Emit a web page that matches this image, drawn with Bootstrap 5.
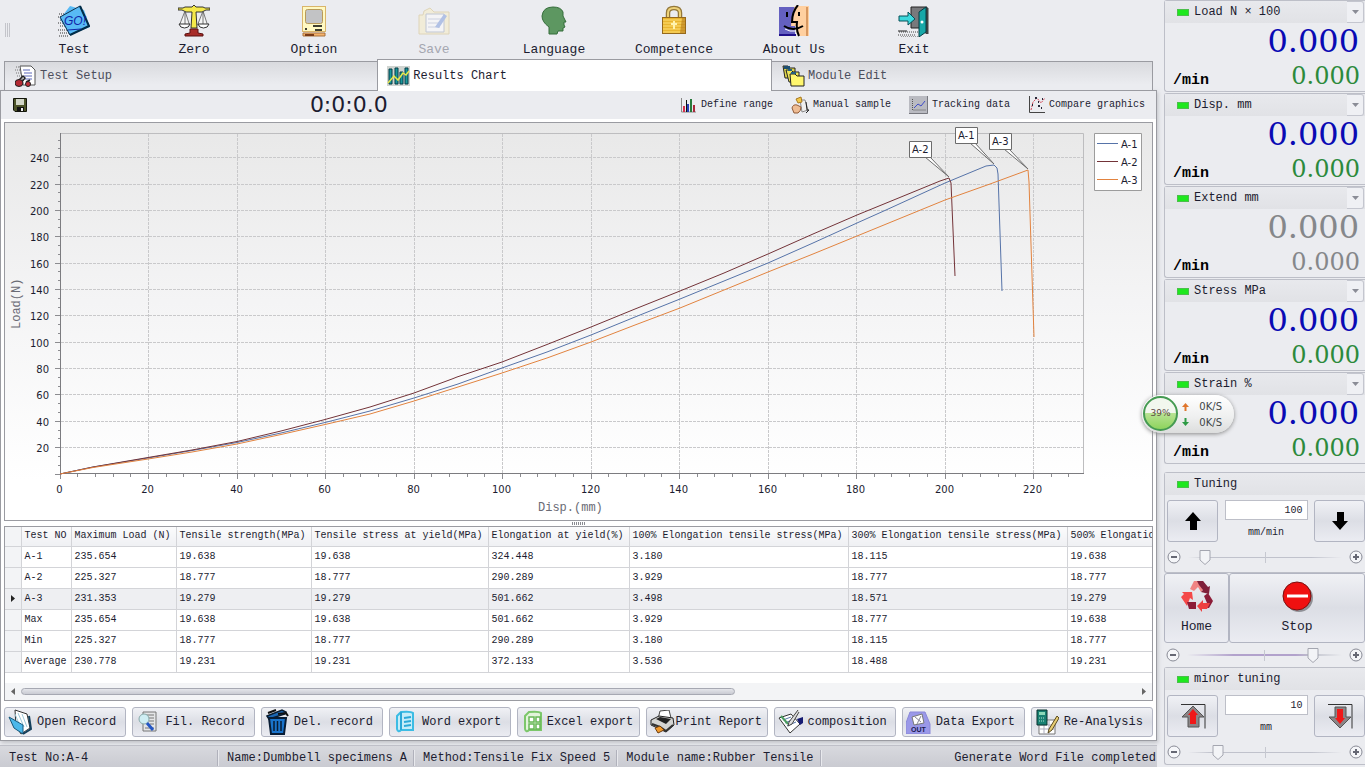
<!DOCTYPE html>
<html lang="en">
<head>
<meta charset="utf-8">
<meta name="viewport" content="width=device-width, initial-scale=1">
<title>Tensile Test - Results Chart</title>
<link href="https://cdn.jsdelivr.net/npm/bootstrap@5.3.0/dist/css/bootstrap.min.css" rel="stylesheet">
<style>
  :root { --ink: #1c1c30; --line: #9a9ba1; --soft: #bdbfc8; --face: #ebecf0; }
  body { font: 12px/16px "Liberation Mono", monospace; color: var(--ink); background: var(--face); overflow-x: hidden; }
  button { font: inherit; color: inherit; background: none; border: 0; padding: 0; }
  svg { display: block; flex: none; }

  .grip { width: 14px; padding-left: 5px; }
  .grip i { display: block; width: 5px; height: 14px; background: repeating-linear-gradient(90deg, #c3c4ca 0 1px, transparent 1px 2px); }
  .tool { width: 120px; font-size: 13px; line-height: 18px; padding-top: 3px; }
  .tool svg { margin: 0 auto 4px; }
  .tool:disabled { color: #a5a7b0; }
  .tool:disabled svg { opacity: .45; }
  .ribbon { height: 60px; }

  .tabs { height: 31px; margin: 0 4px; position: relative; z-index: 1; }
  .tab-item { height: 30px; border: 1px solid var(--line); background: linear-gradient(#d9dade, #ebecf0 80%); color: #4c4e5c; padding-left: 10px; text-align: left; gap: 3px; }
  .tab-item.on { height: 32px; background: #fff; color: var(--ink); border-bottom: 0; padding-left: 9px; }
  .w-a { flex: 373 1 0; border-right: 0; } .w-b { flex: 395 1 0; } .w-c { flex: 381 1 0; border-left: 0; }

  .main-col { min-width: 0; margin-right: 3px; }
  .sheet { border: 1px solid var(--line); background: #fff; box-shadow: 1px 2px 4px #9a9ba188; margin-top: -1px; }
  .subbar { height: 28px; background: var(--face); display: grid; grid-template-columns: 27% 1fr auto; align-items: center; padding-right: 11px; }
  .clock { font: 22px/24px "DejaVu Sans", sans-serif; }
  .subbar .links { gap: 18px; font-size: 10px; }
  .frame { border: 1px solid var(--line); }
  .chart-box { margin: 3px 3px 0; background: linear-gradient(#e8e8e8, #f4f4f5 45%, #fff 90%); }
  .chart-box svg { width: 100%; height: auto; }
  .chart-box text { font: 10px "DejaVu Sans", sans-serif; fill: #1c1c30; }
  .chart-box text.ttl { font: 12px "Liberation Mono", monospace; fill: #6a6b75; }
  .split { height: 5px; }
  .split i { width: 13px; height: 3px; background: repeating-linear-gradient(90deg, #8a8b91 0 1px, #fff 1px 2px); }

  .grid-box { margin: 0 3px; overflow: hidden; }
  .results { width: 1282px; table-layout: fixed; border-collapse: collapse; font-size: 10px; line-height: 14px; }
  .results th, .results td { border: 1px solid #d3d4d8; border-left: 0; border-top: 0; padding: 0 2px 0 3px; height: 21px; font-weight: 400; white-space: nowrap; overflow: hidden; }
  .results thead th { height: 19px; background: linear-gradient(#fbfbfc, #eff0f3); }
  .results .mark-col { background: #f3f4f6; padding: 0 0 0 6px; }
  .results .cur td { background: #eeeff2; }
  .hbar { height: 17px; margin-top: 10px; background: #f3f4f6; padding: 0 6px; gap: 6px; }
  .hbar .lane { flex: 1; }
  .hbar .knob { width: 64%; height: 7px; border: 1px solid #a6a8b2; border-radius: 4px; background: linear-gradient(#e4e5ea, #c9cbd3); }

  .acts { margin: 6px 3px 3px; gap: 6px; }
  .face { border: 1px solid #b2b5c2; border-radius: 3px; background: linear-gradient(#f0f1f5, #dcdee5 50%, #ebecf2); }
  .act { flex: 1 1 0; min-width: 0; height: 30px; padding: 0 4px 0 3px; white-space: nowrap; }
  .act span { flex: 1; text-align: center; }
  .status { height: 23px; margin-top: 4px; background: linear-gradient(#d8d9de, #c9cad1); border-top: 1px solid #bfc0c8; padding-top: 4px; }
  .status span { padding: 0 6px 0 9px; border-right: 1px solid #b0b1bb; box-shadow: 1px 0 #e8e9ed; height: 16px; white-space: nowrap; }
  .status span:first-child { width: 218px; }
  .status span:last-child { border: 0; box-shadow: none; padding-right: 1px; }

  .side { flex: 0 0 205px; padding-left: 4px; }
  .box { border: 1px solid var(--soft); border-right: 0; border-radius: 3px 0 0 3px; }
  .meter { height: 92px; margin-bottom: 1px; position: relative; }
  .cap { height: 22px; background: linear-gradient(#e8e9ed, #e1e2e6); padding-left: 12px; gap: 5px; }
  .cap b { width: 12px; height: 7px; background: #1ee81e; border: 1px solid #4bbf4b; }
  .drop { width: 17px; height: 22px; border: 1px solid #c4c6cf; border-left: 0; border-radius: 0 3px 3px 0; background: #eff0f4; margin-right: 1px; }
  .big { font: 32px/36px "DejaVu Serif", serif; color: #0a0ab4; text-align: right; padding-right: 6px; }
  .rate-row { padding-top: 3px; }
  .rate { font: bold 15px/18px "Liberation Mono", monospace; color: #000; padding-left: 8px; }
  .small-no { font: 24px/28px "DejaVu Serif", serif; color: #2c8a3c; padding-right: 5px; }
  .off .big, .off .small-no { color: #85878a; }

  .tune { height: 101px; }
  .step-row { padding: 5px 0 0 2px; }
  .step { width: 51px; height: 42px; }
  .amount { width: 83px; height: 20px; border: 1px solid var(--soft); border-radius: 0; background: #fff; text-align: right; font: 10px/14px "Liberation Mono", monospace; color: var(--ink); padding: 0 4px; }
  .amount-col { gap: 6px; }
  .unit { font-size: 10px; line-height: 14px; }
  .slide { height: 24px; margin-top: 3px; padding: 0 2px 0 2px; gap: 7px; }
  .slide input { appearance: none; -webkit-appearance: none; flex: 1; min-width: 0; height: 18px; margin: 0; background: linear-gradient(#c6c8d0, #c6c8d0) 50% 50% / 1px 11px no-repeat, linear-gradient(90deg, transparent, #c0c2cc 15%, #c0c2cc 80%, transparent) 0 50% / 100% 1px no-repeat; }
  .slide input.fill { background: linear-gradient(#c6c8d0, #c6c8d0) 50% 50% / 1px 11px no-repeat, linear-gradient(90deg, transparent, #b2a2cc 30%, #b2a2cc 70%, #c0c2cc 80%, transparent) 0 50% / 100% 2px no-repeat; }
  .slide input::-webkit-slider-thumb { -webkit-appearance: none; width: 12px; height: 18px; border: 0; background: url("data:image/svg+xml,%3Csvg xmlns='http://www.w3.org/2000/svg' width='12' height='18'%3E%3Cpath d='M1 2.500H11V12L6 16.500L1 12Z' fill='%23f3f4f7' stroke='%23a4a6b0'/%3E%3C/svg%3E") no-repeat; }
  .home-row { height: 70px; }
  .home-row button { font-size: 13px; line-height: 18px; }
  .home-row svg { margin: 0 auto 6px; }
  .home-key { width: 65px; }

  .netball { position: absolute; left: -23px; top: 22px; width: 92px; height: 38px; border-radius: 19px; background: linear-gradient(#fff, #eeefef 60%, #dcdddd); box-shadow: 0 1px 4px #888; font: 10px/16px "DejaVu Sans", sans-serif; color: #404548; z-index: 2; }
  .ball { width: 35px; height: 35px; border: 2px solid #459a52; border-radius: 50%; background: linear-gradient(#f2f7ee 50%, #b8e293 50%, #8ed45d); line-height: 31px; text-align: center; color: #5c4a44; margin: 1px 4px 0 1px; font-size: 9px; }
</style>
</head>
<body>
<div class="d-flex min-vh-100">
  <main class="main-col flex-grow-1 d-flex flex-column">
    <div class="ribbon d-flex">
      <div class="grip d-flex align-items-center"><i></i></div>
      <button class="tool"><svg width="32" height="32" viewBox="0 0 32 32"><path d="M1 9h8M0 12h7M2 15h7M0 18h7M2 21h6M0 25h10M2 28h10M1 31h10" stroke="#333" stroke-dasharray="1 1"/><path d="M12 1 26 5 32 22 12 30 2 14z" fill="#58baf5"/><path d="M2 12 22 1 31 21 12 30z" fill="#58baf5" stroke="#10304c" stroke-width="1"/><path d="m22 1 9 20-19 9" stroke="#002c48" stroke-width="2" fill="none"/><text x="6" y="20" font-family="Liberation Sans" font-size="12" font-style="italic" fill="#1024a8">GO!</text><path d="m10 25 13-1" stroke="#1024a8"/></svg>Test</button>
      <button class="tool"><svg width="32" height="32" viewBox="0 0 32 32"><path d="M0 3h5l2-1h7l2-2 2 2h7l2 1h5v2h-4l-4 2H18l1 16h-6l1-16H8L4 5H0z" fill="#f5e94a" stroke="#222" stroke-width=".9"/><path d="M7 6 1.500 20h10L7 6v13M25 6l-5.500 14h10L25 6v13" fill="#f5f5f5" stroke="#555" stroke-width=".8"/><path d="M1 19h11q-1 4-5.500 4T1 19M20 19h11q-1 4-5.500 4T20 19" fill="#fff" stroke="#333"/><path d="M12 24h8v4l5 1v2H7v-2l5-1z" fill="#a82c28" stroke="#5a1010"/></svg>Zero</button>
      <button class="tool"><svg width="32" height="32" viewBox="0 0 32 32"><rect x="4.500" y="1.500" width="23" height="25" fill="#fff9c2" stroke="#d9b56a"/><rect x="7.500" y="4.500" width="17" height="14" rx="2" fill="#c2c3c5" stroke="#b89a5a"/><path d="M15 21h9M17 25h7M7 24h2" stroke="#000" stroke-width="1.500"/><path d="M5 28h22v3H5z" fill="#f5b36c" stroke="#a8703a"/><path d="M7 30h9" stroke="#7a3c18" stroke-width="2"/></svg>Option</button>
      <button class="tool" disabled><svg width="32" height="32" viewBox="0 0 32 32"><path d="M1 10h4l1-4 6-3 4 4h15v22H1z" fill="#f9edbc" stroke="#d0b878"/><path d="M8 9h18v18H8z" fill="#fff" stroke="#8f9ab0"/><path d="M10 14h13M10 18h12M10 22h12" stroke="#a8b2cf"/><path d="m17 22 9-13 3 2-8 12z" fill="#6d8fd8"/></svg>Save</button>
      <button class="tool"><svg width="32" height="32" viewBox="0 0 32 32"><path d="M11 29v-7Q4 17 4 11 5 2 15 2q8 0 10 5v4l3 6h-2v3l1 2-2 1v3h-5l-1 3z" fill="#5d9761" stroke="#356d3b"/></svg>Language</button>
      <button class="tool"><svg width="32" height="32" viewBox="0 0 32 32"><path d="M10 13V8q0-5 6-5t6 5v5" fill="none" stroke="#94783a" stroke-width="4.500"/><path d="M10 13V8q0-5 6-5t6 5v5" fill="none" stroke="#eed279" stroke-width="2"/><rect x="4.500" y="12.500" width="23" height="16" fill="#e9b52f" stroke="#96691c"/><path d="M5 15h22M5 18h22M5 21h22M5 24h22M5 27h22" stroke="#ffdf77"/><path d="M24 13h3v15h-5z" fill="#b47a1c" opacity=".6"/><path d="M16 16v8M13 19h6" stroke="#fff3b0" stroke-width="2"/></svg>Competence</button>
      <button class="tool"><svg width="32" height="32" viewBox="0 0 32 32"><path d="M1 2h16v29H1z" fill="#6460c0"/><path d="M1 30h17" stroke="#20108a" stroke-width="2"/><path d="M17 1h14v30H20q-2-3-2-10h-5q1-13 4-20z" fill="#ffd0a0"/><path d="M29 2v29" stroke="#d89860" stroke-width="2"/><path d="M20 0q-6 7-6 17h5q-1 8 2 14" fill="none" stroke="#000" stroke-width="2"/><path d="M9 7v5M21 7v4" stroke="#000" stroke-width="2"/><path d="M6 21q9 6 19 0" stroke="#000" stroke-width="2" fill="none"/><path d="M7 24q5 3 10 2" stroke="#fff" fill="none"/></svg>About Us</button>
      <button class="tool"><svg width="32" height="32" viewBox="0 0 32 32"><path d="M1 27h19M0 30h18M3 32h18" stroke="#444" stroke-dasharray="1 1"/><path d="M13 2h16v21H13z" fill="#78797c" stroke="#222"/><path d="M29 3v26" stroke="#444" stroke-width="3"/><path d="m21 7 7-5v25l-7 5z" fill="#18a8a8" stroke="#053c44"/><path d="M1 11h9V7l7 7-7 6v-4H1z" fill="#3cd8dc" stroke="#075058"/><circle cx="24" cy="17" r="1.500" fill="#fff"/><path d="M0 26h9" stroke="#222"/></svg>Exit</button>
    </div>

    <div class="tabs d-flex align-items-end">
      <button class="tab-item w-a d-flex align-items-center"><svg width="22" height="22" viewBox="0 0 22 22"><path d="M5 1h11l4 4v15H8z" fill="#fff" stroke="#555"/><path d="M8 5h7M9 8h8M9 11h8M10 14h7" stroke="#5a66b8"/><path d="M1 2h4M0 5h5M1 8h5M2 11h4" stroke="#777" stroke-dasharray="1 1"/><path d="m3 16 5-5 2 2-4 5m5-1 4-2" stroke="#222" stroke-width="1.500" fill="none"/><ellipse cx="4" cy="18" rx="4" ry="3.500" fill="#b42a34" stroke="#222"/><circle cx="13" cy="19" r="2.500" fill="#c4303a" stroke="#222"/></svg>Test Setup</button>
      <button class="tab-item w-b on d-flex align-items-center"><svg width="23" height="20" viewBox="0 0 23 20"><path d="M0 0h23v20H0z" fill="#cfd4d0"/><path d="M2 3h3v15H2zM8 2h3v16H8zM13 6h3v12h-3zM18 2h3v16h-3z" fill="#19999b" stroke="#063c48"/><path d="m1 17 6-7 4 4 5-7 3 2 3-4" stroke="#e9e94a" stroke-width="1.500" fill="none"/></svg>Results Chart</button>
      <button class="tab-item w-c d-flex align-items-center"><svg width="23" height="22" viewBox="0 0 23 22"><path d="M1 1h5l2 2h5v10H3z" fill="#e0d64a" stroke="#222"/><path d="M2 1h6v3H2z" fill="#1d4f70"/><path d="M4 5h5l2 2h6v10H7z" fill="#efe65a" stroke="#222"/><path d="M8 9h5l2 2h7v10H9z" fill="#fff66e" stroke="#222"/><path d="M6 5h4M9 8h5" stroke="#256080" stroke-width="2"/></svg>Module Edit</button>
    </div>

    <section class="sheet d-flex flex-column">
      <div class="subbar">
        <button class="ms-2 ps-1" aria-label="Save"><svg width="14" height="14" viewBox="0 0 14 14"><path d="M.5.5h13v13H2L.5 12z" fill="#4c5328" stroke="#14160c"/><path d="M3 1h8v6H3z" fill="#d2d6c8"/><path d="M4 9h7v4H4z" fill="#111"/><path d="M8 10h2v3H8z" fill="#eee"/></svg></button>
        <span class="clock">0:0:0.0</span>
        <div class="links d-flex">
          <button class="d-flex align-items-center gap-1"><svg width="17" height="16" viewBox="0 0 17 16"><path d="M1.500 1v14H16" stroke="#888" fill="none"/><path d="M3 9h2v6H3z" fill="#d8304c"/><path d="M6 3h1v12H6z" fill="#111"/><path d="M7 7h2v8H7z" fill="#2740b8"/><path d="M10 2h2v13h-2z" fill="#277a3c"/><path d="M13 8h2v7h-2z" fill="#a8283c"/></svg>Define range</button>
          <button class="d-flex align-items-center gap-1"><svg width="18" height="18" viewBox="0 0 18 18"><path d="M9 4h5l3 10-6 2z" fill="#eee" stroke="#888"/><path d="m5 3 5-2 1 5-4 1z" fill="#f2c84a" stroke="#a87820"/><path d="m15 6 1 8h2l-3 3" stroke="#222" fill="none"/><path d="M1 12q1-4 5-3l4 2q0 4-3 6H3z" fill="#eebc94" stroke="#905a38"/></svg>Manual sample</button>
          <button class="d-flex align-items-center gap-1"><svg width="19" height="18" viewBox="0 0 19 18"><path d="M0 0h19v18H0z" fill="#b9bac1"/><path d="M0 17.500h18.500V0" stroke="#77787f" fill="none"/><path d="M3.500 3v11H17" stroke="#555" stroke-dasharray="1 1" fill="none"/><path d="m5 12 4-4 3 2 4-5" stroke="#3e4cc8" fill="none"/></svg>Tracking data</button>
          <button class="d-flex align-items-center gap-1"><svg width="17" height="18" viewBox="0 0 17 18"><path d="M1.500 0v16.500H17" stroke="#444" fill="none"/><path d="m3 14 2-8 4-4 4 5 4-5" stroke="#d44a5a" fill="none" stroke-dasharray="2 1"/><path d="M4 9h1M7 2h2M10 10h2M14 3h1M13 12h1M10 6h1" stroke="#282838" stroke-width="2"/></svg>Compare graphics</button>
        </div>
      </div>

      <div class="frame chart-box">
        <svg id="plot" viewBox="5 123 1147 397" role="img" aria-label="Load against displacement for A-1, A-2 and A-3">
          <g id="axes" fill="none"></g>
          <g fill="none" stroke-width="1">
            <path stroke="#5673a8" d="M60 474 93 467 148 458 192 450.500 237 442.500 281 433 325 422.500 370 411 414 398 458 384 502 368 547 352 591 335 635 317 680 299 724 281 768 263 813 243 857 223 886 210 945 183 986 166 994 165 997 168 998 174 1002 291"/>
            <path stroke="#733338" d="M60 474 93 467 148 457.500 192 450 237 441.500 281 431 325 419.500 370 407 414 393 452 379 457 377 502 362 547 344.500 591 327 635 309 680 291 724 273 768 254 813 234 857 215 901 197 940 181 949 178 951 183 955 276"/>
            <path stroke="#e2833f" d="M60 474 93 467.500 148 459 192 452 237 444 281 434.500 325 424.500 370 414 414 401 458 387 502 373 547 358 591 342 635 325 680 308 724 290 768 272 813 254 857 236 901 218 945 200 990 184 1028 170 1029 182 1034 337"/>
          </g>
          <g fill="#fff" stroke="#6c6c6c">
            <path d="M925 157 949 177 930 157M970 143 994 164 975 143M1004 149 1028 169 1009 149"/>
            <path d="M909.500 141.500h22v16h-22zM955.500 127.500h22v16h-22zM989.500 133.500h22v16h-22z"/>
            <path stroke="#9c9c9c" d="M1094.500 133.500h47v57h-47z"/>
          </g>
          <path stroke="#5673a8" d="M1097 143.500h21"/><path stroke="#733338" d="M1097 161.500h21"/><path stroke="#e2833f" d="M1097 179.500h21"/>
          <text x="912" y="153">A-2</text><text x="958" y="139">A-1</text><text x="992" y="145">A-3</text>
          <text x="1121" y="148">A-1</text><text x="1121" y="166">A-2</text><text x="1121" y="184">A-3</text>
          <text class="ttl" x="538" y="511">Disp.(mm)</text>
          <text class="ttl" transform="translate(20 329) rotate(-90)">Load(N)</text>
        </svg>
      </div>
      <div class="split d-flex justify-content-center align-items-center"><i></i></div>

      <div class="frame grid-box">
        <table class="results">
          <colgroup><col style="width:16px"><col style="width:50px"><col style="width:105px"><col style="width:135px"><col style="width:177px"><col style="width:141px"><col style="width:219px"><col style="width:219px"><col style="width:220px"></colgroup>
          <thead><tr><th class="mark-col"></th><th>Test NO</th><th>Maximum Load (N)</th><th>Tensile strength(MPa)</th><th>Tensile stress at yield(MPa)</th><th>Elongation at yield(%)</th><th>100% Elongation tensile stress(MPa)</th><th>300% Elongation tensile stress(MPa)</th><th>500% Elongation tensile stress(MPa)</th></tr></thead>
          <tbody>
            <tr><td class="mark-col"></td><td>A-1</td><td>235.654</td><td>19.638</td><td>19.638</td><td>324.448</td><td>3.180</td><td>18.115</td><td>19.638</td></tr>
            <tr><td class="mark-col"></td><td>A-2</td><td>225.327</td><td>18.777</td><td>18.777</td><td>290.289</td><td>3.929</td><td>18.777</td><td>18.777</td></tr>
            <tr class="cur"><td class="mark-col"><svg width="4" height="7"><path d="M0 0 4 3.500 0 7z" fill="#222"/></svg></td><td>A-3</td><td>231.353</td><td>19.279</td><td>19.279</td><td>501.662</td><td>3.498</td><td>18.571</td><td>19.279</td></tr>
            <tr><td class="mark-col"></td><td>Max</td><td>235.654</td><td>19.638</td><td>19.638</td><td>501.662</td><td>3.929</td><td>18.777</td><td>19.638</td></tr>
            <tr><td class="mark-col"></td><td>Min</td><td>225.327</td><td>18.777</td><td>18.777</td><td>290.289</td><td>3.180</td><td>18.115</td><td>18.777</td></tr>
            <tr><td class="mark-col"></td><td>Average</td><td>230.778</td><td>19.231</td><td>19.231</td><td>372.133</td><td>3.536</td><td>18.488</td><td>19.231</td></tr>
          </tbody>
        </table>
        <div class="hbar d-flex align-items-center">
          <svg width="4" height="7"><path d="M4 0 0 3.500 4 7z" fill="#666"/></svg>
          <div class="lane"><div class="knob"></div></div>
          <svg width="4" height="7"><path d="M0 0 4 3.500 0 7z" fill="#666"/></svg>
        </div>
      </div>

      <div class="acts d-flex">
        <button class="act face d-flex align-items-center"><svg width="24" height="26" viewBox="0 0 24 26"><path d="m7 1 12 4 3 14-9 6-5-8z" fill="#fff" stroke="#333"/><path d="m10 4 6 14M14 5l5 13M7 5l5 12" stroke="#9ec8d8"/><path d="m1 8 14 8v9L6 19z" fill="#4cb8ea" stroke="#17597c"/><path d="m15 25 8-5-2-13" stroke="#123f5c" stroke-width="2" fill="none"/></svg><span>Open Record</span></button>
        <button class="act face d-flex align-items-center"><svg width="24" height="24" viewBox="0 0 24 24"><path d="M7 2h13v19H7z" fill="#e4e5e7" stroke="#777"/><path d="M9 5h9M12 8h6M13 11h5M14 14h4M9 18h9" stroke="#777"/><circle cx="8" cy="9" r="5" fill="#cfeef4" stroke="#8aa"/><path d="m11 13 6 7" stroke="#2456c4" stroke-width="3"/></svg><span>Fil. Record</span></button>
        <button class="act face d-flex align-items-center"><svg width="24" height="26" viewBox="0 0 24 26"><path d="m2 7 15-6 4 2-1 2-16 5z" fill="#1c67b4" stroke="#0a1c30" stroke-width="1.500"/><path d="m13 5 8-1 2 3M3 4l8-3" stroke="#111" stroke-width="2" fill="none"/><path d="M4 9h17l-2 16H6z" fill="#1a74cc" stroke="#081c34" stroke-width="2"/><path d="M9 12v10M12.500 12v10M16 12v10" stroke="#081c34" stroke-width="1.500"/></svg><span>Del. record</span></button>
        <button class="act face d-flex align-items-center"><svg width="24" height="24" viewBox="0 0 24 24"><path d="M8 2q10-1 12 1v17H8q-3 3-4-1V6z" fill="#c5edf9" stroke="#3cbce4" stroke-width="2"/><path d="M8 2v18M11 8l7-1M11 12l7-1M11 16l7-1" stroke="#2ca9d8" stroke-width="2"/></svg><span>Word export</span></button>
        <button class="act face d-flex align-items-center"><svg width="24" height="24" viewBox="0 0 24 24"><path d="M8 2q10-1 12 1v17H8q-3 3-4-1V6z" fill="#e2f4da" stroke="#7cc76a" stroke-width="2"/><path d="M8 7h5v5H8zM15 7h4v5h-4zM8 14h5v5H8zM15 14h4v5h-4z" fill="#fff" stroke="#69b858" stroke-width="1.500"/></svg><span>Excel export</span></button>
        <button class="act face d-flex align-items-center"><svg width="25" height="24" viewBox="0 0 25 24"><path d="m8 9 2-8 9-1 2 8z" fill="#fff" stroke="#444"/><path d="m1 10 8-4 14 2 1 7-8 7L1 15z" fill="#d4d4d2" stroke="#222"/><path d="m6 9 4-2 11 2-5 5z" fill="#222"/><path d="m2 14 8 3 6 4 7-6" stroke="#333" fill="none" stroke-width="2"/><path d="m5 18 5-2 4 4-6 3z" fill="#f29a2c" stroke="#6a3c10"/></svg><span>Print Report</span></button>
        <button class="act face d-flex align-items-center"><svg width="25" height="24" viewBox="0 0 25 24"><path d="m1 8 12-4 9 10-10 9z" fill="#fff" stroke="#333"/><path d="m5 10 8-3M7 13l9-4M9 16l9-4" stroke="#5676a8"/><path d="m3 6 7 8" stroke="#4b9c60" stroke-width="2"/><path d="m20 0-9 12-1 4 4-2 7-12" fill="#ddd" stroke="#444"/><path d="m19 9 6-2v6l-3 2z" fill="#151a72"/></svg><span>composition</span></button>
        <button class="act face d-flex align-items-center"><svg width="25" height="24" viewBox="0 0 25 24"><path d="M4 2h15l5 12v10H0V13z" fill="#9a98e8" stroke="#8a88d8"/><path d="m6 7 10-3 2 9-10 2z" fill="#fff" stroke="#777"/><path d="m9 7 6 5m0-6-4 8" stroke="#889"/><text x="5" y="22" font-family="Liberation Sans" font-size="7" font-weight="bold" fill="#1a1a50">OUT</text></svg><span>Data Export</span></button>
        <button class="act face d-flex align-items-center"><svg width="24" height="26" viewBox="0 0 24 26"><path d="M4 11h16v14H4z" fill="#fff" stroke="#777"/><path d="M5 16h15M5 20h15M9 12v13M14 12v13" stroke="#aab"/><path d="M2 1h10v15H2z" fill="#188072" stroke="#0a322e"/><path d="M4 3h6v3H4z" fill="#8cd8b8"/><path d="M4 9h6M4 12h6" stroke="#b5e4d4" stroke-dasharray="1 1"/><path d="m22 7-8 13-1 4 4-3 7-12z" fill="#e7cd73" stroke="#5a4a20"/></svg><span>Re-Analysis</span></button>
      </div>
    </section>

    <footer class="status d-flex">
      <span>Test No:A-4</span><span>Name:Dumbbell specimens A</span><span>Method:Tensile Fix Speed 5</span><span>Module name:Rubber Tensile</span><span class="ms-auto">Generate Word File completed</span>
    </footer>
  </main>

  <aside class="side">
    <section class="box meter"><div class="cap d-flex align-items-center"><b></b>Load N × 100<button class="drop ms-auto" aria-label="Load unit"><svg class="m-auto" width="7" height="4"><path d="M0 0h7L3.500 4z" fill="#8a8c96"/></svg></button></div><div class="big">0.000</div><div class="rate-row d-flex justify-content-between align-items-end"><span class="rate">/min</span><span class="small-no">0.000</span></div></section>
    <section class="box meter"><div class="cap d-flex align-items-center"><b></b>Disp. mm<button class="drop ms-auto" aria-label="Displacement unit"><svg class="m-auto" width="7" height="4"><path d="M0 0h7L3.500 4z" fill="#8a8c96"/></svg></button></div><div class="big">0.000</div><div class="rate-row d-flex justify-content-between align-items-end"><span class="rate">/min</span><span class="small-no">0.000</span></div></section>
    <section class="box meter off"><div class="cap d-flex align-items-center"><b></b>Extend mm<button class="drop ms-auto" aria-label="Extension unit"><svg class="m-auto" width="7" height="4"><path d="M0 0h7L3.500 4z" fill="#8a8c96"/></svg></button></div><div class="big">0.000</div><div class="rate-row d-flex justify-content-between align-items-end"><span class="rate">/min</span><span class="small-no">0.000</span></div></section>
    <section class="box meter"><div class="cap d-flex align-items-center"><b></b>Stress MPa<button class="drop ms-auto" aria-label="Stress unit"><svg class="m-auto" width="7" height="4"><path d="M0 0h7L3.500 4z" fill="#8a8c96"/></svg></button></div><div class="big">0.000</div><div class="rate-row d-flex justify-content-between align-items-end"><span class="rate">/min</span><span class="small-no">0.000</span></div></section>
    <section class="box meter"><div class="cap d-flex align-items-center"><b></b>Strain %<button class="drop ms-auto" aria-label="Strain unit"><svg class="m-auto" width="7" height="4"><path d="M0 0h7L3.500 4z" fill="#8a8c96"/></svg></button></div><div class="big">0.000</div><div class="rate-row d-flex justify-content-between align-items-end"><span class="rate">/min</span><span class="small-no">0.000</span></div>
      <div class="netball d-flex"><div class="ball">39%</div><div class="d-flex flex-column justify-content-around py-1"><svg width="7" height="8"><path d="M3.500 0 7 4H4.500v4h-2V4H0z" fill="#e0762c"/></svg><svg width="7" height="8"><path d="M3.500 8 7 4H4.500V0h-2v4H0z" fill="#2c9a44"/></svg></div><div class="ms-auto me-2 pe-1 pt-1">0K/S<br>0K/S</div></div>
    </section>

    <section class="box tune mt-2"><div class="cap d-flex align-items-center"><b></b>Tuning</div>
      <div class="step-row d-flex justify-content-between">
        <button class="step face" aria-label="Up"><svg class="m-auto" width="16" height="18"><path d="m8 0 8 9h-4v9H5V9H0z" fill="#000"/></svg></button>
        <div class="amount-col d-flex flex-column align-items-center"><input class="amount" aria-label="Tuning speed" value="100"><span class="unit">mm/min</span></div>
        <button class="step face" aria-label="Down"><svg class="m-auto" width="16" height="18"><path d="m8 18 8-9h-4V0H5v9H0z" fill="#000"/></svg></button>
      </div>
      <div class="slide d-flex align-items-center"><svg width="14" height="14"><circle cx="7" cy="7" r="6" fill="#f5f6f9" stroke="#898b96"/><path d="M4 7h6" stroke="#666874" stroke-width="2"/></svg><input type="range" aria-label="Tuning" value="8"><svg width="14" height="14"><circle cx="7" cy="7" r="6" fill="#f5f6f9" stroke="#898b96"/><path d="M4 7h6M7 4v6" stroke="#666874" stroke-width="2"/></svg></div>
    </section>
    <div class="home-row d-flex">
      <button class="face home-key"><svg width="32" height="32" viewBox="0 0 32 32"><path d="M9 9 13 1h9l3 5-5 6-3-5-4 4z" fill="#f08484"/><path d="m16 1 6 0 5 6 2-1-1 8-8-2 2-2-4-5z" fill="#80203a"/><path d="M1 12l10 0 1 8-3-2-3 8-6-9 3-3z" fill="#f44848"/><path d="m23 16 4-3 5 8-4 7h-6l4-5z" fill="#8c1c38"/><path d="M6 22h9v7H8z" fill="#8c1c38"/><path d="m16 26 6-6v3h7l-3 6h-5v3z" fill="#ee4040"/></svg>Home</button>
      <button class="face flex-grow-1"><svg width="33" height="32" viewBox="0 0 33 32"><circle cx="18" cy="18" r="14" fill="#8f9096"/><circle cx="16" cy="16" r="14" fill="#f01010" stroke="#7a1010"/><path d="M6 16h21" stroke="#fff" stroke-width="3"/></svg>Stop</button>
    </div>
    <div class="slide d-flex align-items-center m-0"><svg width="14" height="14"><circle cx="7" cy="7" r="6" fill="#f5f6f9" stroke="#898b96"/><path d="M4 7h6" stroke="#666874" stroke-width="2"/></svg><input class="fill" type="range" aria-label="Speed" value="84"><svg width="14" height="14"><circle cx="7" cy="7" r="6" fill="#f5f6f9" stroke="#898b96"/><path d="M4 7h6M7 4v6" stroke="#666874" stroke-width="2"/></svg></div>
    <section class="box"><div class="cap d-flex align-items-center"><b></b>minor tuning</div>
      <div class="step-row d-flex justify-content-between">
        <button class="step face" aria-label="Jog up"><svg class="m-auto" width="26" height="26"><path d="M1 1.500h24v24" stroke="#333" fill="none"/><path d="m13 3 11 11h-5v10H8V14H2z" fill="#8b8587" stroke="#555"/><path d="m13 6 5 6h-2v9h-6v-9H8z" fill="#f01818"/></svg></button>
        <div class="amount-col d-flex flex-column align-items-center"><input class="amount" aria-label="Minor tuning step" value="10"><span class="unit">mm</span></div>
        <button class="step face" aria-label="Jog down"><svg class="m-auto" width="26" height="26"><path d="M1 1.500h24v24" stroke="#333" fill="none"/><path d="M13 25 24 14h-5V4H8v10H2z" fill="#8b8587" stroke="#555"/><path d="m13 21 5-6h-2V6h-6v9H8z" fill="#f01818"/></svg></button>
      </div>
      <div class="slide d-flex align-items-center mb-0"><svg width="14" height="14"><circle cx="7" cy="7" r="6" fill="#f5f6f9" stroke="#898b96"/><path d="M4 7h6" stroke="#666874" stroke-width="2"/></svg><input type="range" aria-label="Minor tuning" value="17"><svg width="14" height="14"><circle cx="7" cy="7" r="6" fill="#f5f6f9" stroke="#898b96"/><path d="M4 7h6M7 4v6" stroke="#666874" stroke-width="2"/></svg></div>
    </section>
  </aside>
</div>
<script src="https://cdn.jsdelivr.net/npm/bootstrap@5.3.0/dist/js/bootstrap.bundle.min.js"></script>
<script>
  // Grid lines, ticks and tick labels of the chart
  const g = document.getElementById('axes');
  const X0 = 60.5, Y0 = 474.5, kx = 4.425, ky = 1.318;
  let s = '';
  for (let v = 0; v < 232; v += 4) {
    const x = Math.round(X0 + v * kx) - .5, major = v % 20 === 0;
    s += `<path stroke="#8c8c90" d="M${x} 474v${major ? 5 : 3}"/>`;
    if (major) {
      if (v) s += `<path stroke="#c9c9cb" stroke-dasharray="3 1" d="M${x} 134V474"/>`;
      s += `<text x="${x - 1}" y="493" text-anchor="middle">${v}</text>`;
    }
  }
  for (let i = 0; i < 39; i++) {
    const y = Math.round(Y0 - i * 20 / 3 * ky) - .5, major = i % 3 === 0;
    s += `<path stroke="#8c8c90" d="M${major ? 55 : 58} ${y}H60"/>`;
    if (major && i) {
      s += `<path stroke="#c9c9cb" stroke-dasharray="3 1" d="M61 ${y}H1084"/>`;
      s += `<text x="49" y="${y + 4}" text-anchor="end">${i / 3 * 20}</text>`;
    }
  }
  s += '<path stroke="#bdbdbf" d="M60 133.500H1083.500V474"/><path stroke="#7c7c80" d="M60.500 133V473.500H1084"/>';
  g.innerHTML = s;
</script>
</body>
</html>
